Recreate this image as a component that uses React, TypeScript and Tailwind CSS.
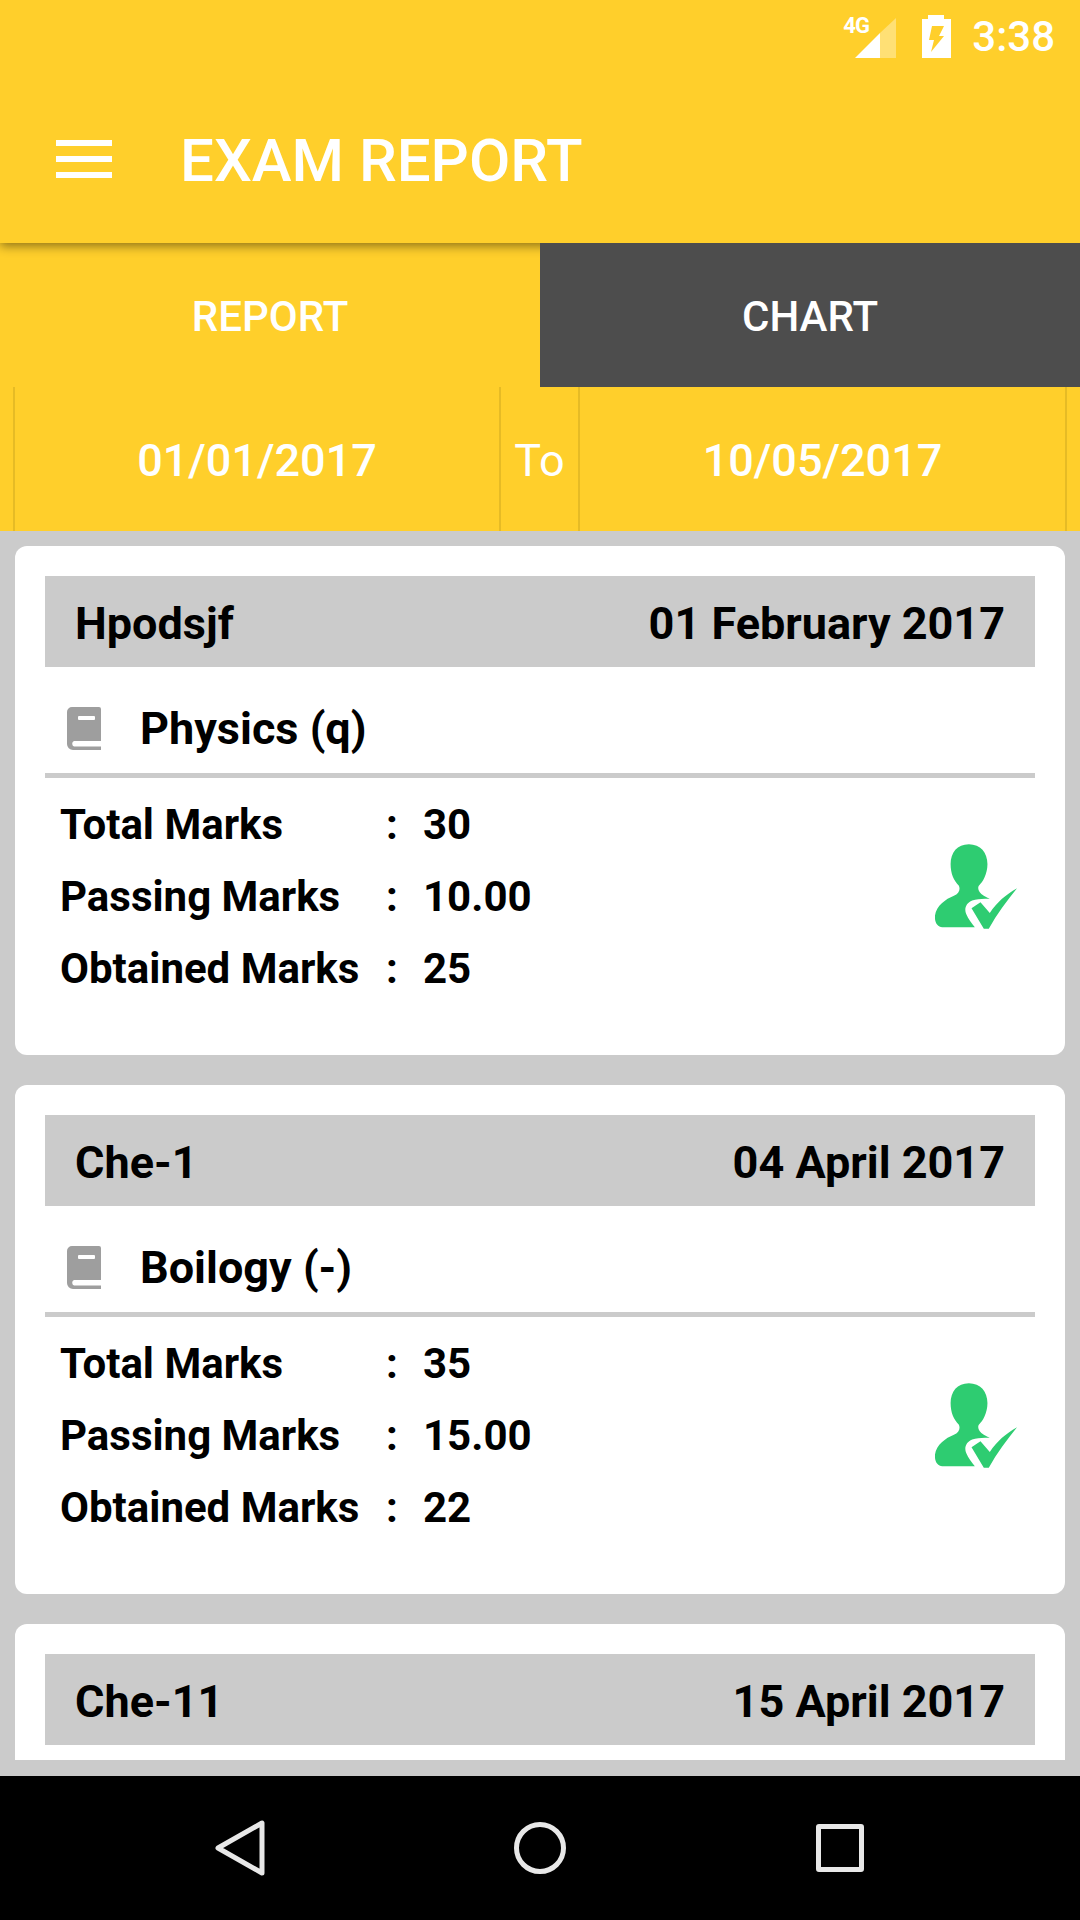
const exams = [
  { name: "Hpodsjf", date: "01 February 2017", subject: "Physics (q)", total: "30", passing: "10.00", obtained: "25" },
  { name: "Che-1", date: "04 April 2017", subject: "Boilogy (-)", total: "35", passing: "15.00", obtained: "22" },
];

function BookIcon() {
  return (
    <svg width="34" height="43" viewBox="0 0 34 43">
      <path fill="#9e9e9e" d="M5 0h27a2 2 0 0 1 2 2v32H7a3 3 0 0 0 0 5.500h27V43H6a6 6 0 0 1-6-6V5a5 5 0 0 1 5-5z" />
      <rect x="11" y="9" width="17" height="4" rx="1" fill="#fff" />
    </svg>
  );
}

function PassIcon() {
  return (
    <svg width="83" height="85" viewBox="78 75 250 255" className="mb-[20px]">
      <path
        fill="#2ecc71"
        d="M180 75C215 75 236 100 236 135C236 165 222 190 210 200C205 208 210 222 225 230L243 240C225 238 205 240 190 245C172 252 165 270 172 285C178 300 190 315 198 325L100 325C85 325 76 310 78 290C82 260 110 240 135 230C150 224 155 212 150 200C135 185 125 165 125 135C125 100 145 75 180 75Z"
      />
      <path fill="#2ecc71" d="M188 268L215 250L243 282C265 250 290 228 325 208C295 245 265 285 240 330L225 330Z" />
    </svg>
  );
}

function CardHeader({ name, date }: { name: string; date: string }) {
  return (
    <div className="flex h-[91px] items-center justify-between bg-[#cbcbcb] px-[30px] pt-[4px] text-[45px] font-bold text-black">
      <span>{name}</span>
      <span>{date}</span>
    </div>
  );
}

function ExamCard({ exam }: { exam: (typeof exams)[number] }) {
  const rows = [
    ["Total Marks", exam.total],
    ["Passing Marks", exam.passing],
    ["Obtained Marks", exam.obtained],
  ];
  return (
    <div className="h-[509px] shrink-0 rounded-[12px] bg-white px-[30px] pt-[30px]">
      <CardHeader name={exam.name} date={exam.date} />
      <div className="box-content flex h-[90px] items-center border-b-[5px] border-[#cbcbcb] pl-[22px] pt-[16px]">
        <BookIcon />
        <span className="ml-[39px] mt-[2px] text-[45px] font-bold text-black">{exam.subject}</span>
      </div>
      <div className="flex items-center justify-between pl-[15px] pr-[17px] pt-[10px]">
        <div className="flex flex-col">
          {rows.map(([label, value]) => (
            <div key={label} className="flex h-[72px] items-center text-[42px] font-bold text-black">
              <span className="w-[326px]">{label}</span>
              <span className="w-[37px]">:</span>
              <span>{value}</span>
            </div>
          ))}
        </div>
        <PassIcon />
      </div>
    </div>
  );
}

export default function App() {
  return (
    <div className="flex h-[1920px] w-[1080px] flex-col overflow-hidden bg-[#cbcbcb] font-['Roboto',sans-serif]">
      {/* status bar + toolbar */}
      <div className="relative z-10 h-[243px] shrink-0 bg-[#ffcf2b] shadow-[0_3px_10px_rgba(0,0,0,0.45)]">
        <div className="flex h-[75px] items-start justify-end pr-[25px] pt-[15px]">
          <span className="relative mt-[3px] h-[40px] w-[41px]">
            <span className="absolute left-[-12px] top-[-5px] text-[22px] font-bold leading-[26px] tracking-[-1px] text-white">4G</span>
            <svg width="41" height="40" viewBox="0 0 41 40">
              <path fill="#fff" fillOpacity="0.35" d="M25 15L41 0V40H25z" />
              <path fill="#fff" d="M25 15V40H0z" />
            </svg>
          </span>
          <svg className="ml-[26px]" width="29" height="43" viewBox="0 0 29 43">
            <path fill="#fff" fillRule="evenodd" d="M6 0h16v4h7v39H0V4h6zM10 11H22L17 21H22L9 37L12 25H7z" />
          </svg>
          <span className="ml-[21px] mt-[1px] text-[42px] font-medium leading-[42px] text-white">3:38</span>
        </div>
        <div className="flex h-[168px] items-center pl-[56px]">
          <div className="flex flex-col gap-[10px]">
            <span className="block h-[6px] w-[56px] bg-white" />
            <span className="block h-[6px] w-[56px] bg-white" />
            <span className="block h-[6px] w-[56px] bg-white" />
          </div>
          <span className="ml-[68px] pt-[4px] text-[60px] font-medium text-white">EXAM REPORT</span>
        </div>
      </div>

      {/* tabs */}
      <div className="flex h-[144px] shrink-0 text-[42px] font-medium text-white">
        <div className="flex w-[540px] items-center justify-center bg-[#ffcf2b] pt-[2px]">REPORT</div>
        <div className="relative z-20 flex w-[540px] items-center justify-center bg-[#4d4d4d] pt-[2px]">CHART</div>
      </div>

      {/* date range */}
      <div className="flex h-[144px] shrink-0 bg-[#ffcf2b] px-[13px] text-[45px] text-white">
        <div className="flex w-[488px] items-center justify-center border-x-2 border-[#e6bb25] pt-[4px] font-medium">01/01/2017</div>
        <div className="flex w-[77px] items-center justify-center pt-[4px]">To</div>
        <div className="flex flex-1 items-center justify-center border-x-2 border-[#e6bb25] pt-[4px] font-medium">10/05/2017</div>
      </div>

      {/* list */}
      <div className="mx-[15px] mt-[15px] flex flex-col gap-[30px]">
        {exams.map((exam) => (
          <ExamCard key={exam.name} exam={exam} />
        ))}
        <div className="h-[136px] rounded-t-[12px] bg-white px-[30px] pt-[30px]">
          <CardHeader name="Che-11" date="15 April 2017" />
        </div>
      </div>

      {/* nav bar */}
      <div className="mt-auto grid h-[144px] shrink-0 grid-cols-3 items-center bg-black px-[90px]">
        <svg width="52" height="58" viewBox="0 0 52 58" className="justify-self-center">
          <path d="M48 4v50L4 29z" fill="none" stroke="#e8e8e8" strokeWidth="5" strokeLinejoin="round" />
        </svg>
        <svg width="52" height="52" viewBox="0 0 52 52" className="justify-self-center">
          <circle cx="26" cy="26" r="23.5" fill="none" stroke="#e8e8e8" strokeWidth="5" />
        </svg>
        <div className="h-[48px] w-[48px] justify-self-center rounded-[3px] border-[5px] border-[#e8e8e8]" />
      </div>
    </div>
  );
}
